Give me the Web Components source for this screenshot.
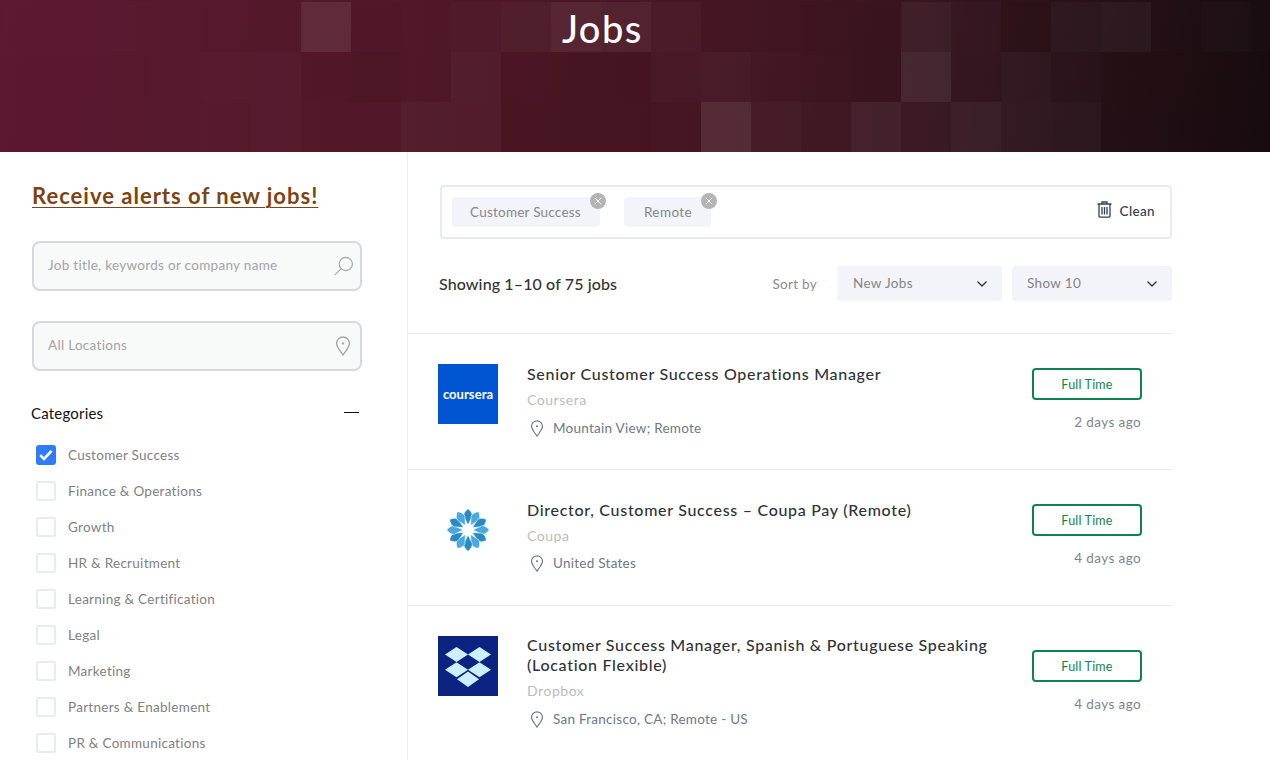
<!DOCTYPE html>
<html lang="en"><head><meta charset="utf-8"><title>Jobs</title>
<style>
html,body{margin:0;padding:0;height:760px;overflow:hidden;background:#fff}
body{font-family:"Lato","Liberation Sans",sans-serif;color:#333}
</style></head><body>
<job-page>
  <job-hero slot="hero">Jobs</job-hero>
  <job-sidebar slot="side">
    <filter-check checked>Customer Success</filter-check>
    <filter-check>Finance &amp; Operations</filter-check>
    <filter-check>Growth</filter-check>
    <filter-check>HR &amp; Recruitment</filter-check>
    <filter-check>Learning &amp; Certification</filter-check>
    <filter-check>Legal</filter-check>
    <filter-check>Marketing</filter-check>
    <filter-check>Partners &amp; Enablement</filter-check>
    <filter-check>PR &amp; Communications</filter-check>
  </job-sidebar>
  <job-list slot="main">
    <job-card title-text="Senior Customer Success Operations Manager" company="Coursera" place="Mountain View; Remote" age="2 days ago">
      <co-logo slot="logo" kind="coursera"></co-logo>
    </job-card>
    <job-card style="--loc-gap:7px" title-text="Director, Customer Success – Coupa Pay (Remote)" company="Coupa" place="United States" age="4 days ago">
      <co-logo slot="logo" kind="coupa"></co-logo>
    </job-card>
    <job-card style="--body-lift:-1px" title-text="Customer Success Manager, Spanish &amp; Portuguese Speaking (Location Flexible)" company="Dropbox" place="San Francisco, CA; Remote - US" age="4 days ago">
      <co-logo slot="logo" kind="dropbox"></co-logo>
    </job-card>
  </job-list>
</job-page>
<script>
const PIN = (s,c,w)=>`<svg width="${w}" height="${s}" viewBox="0 0 16 20" fill="none" stroke="${c}" stroke-width="1.4" aria-hidden="true"><path d="M8 19C5 14.5 1.6 11 1.6 7.4a6.4 6.4 0 0 1 12.8 0C14.4 11 11 14.5 8 19Z" stroke-linejoin="round"/><circle cx="8" cy="7.4" r="1.2" fill="${c}" stroke="none"/></svg>`;
function def(name, html, init){
  customElements.define(name, class extends HTMLElement{
    constructor(){super();this.attachShadow({mode:'open'});}
    connectedCallback(){this.shadowRoot.innerHTML = typeof html==='function'?html(this):html; if(init) init(this);}
  });
}
def('job-page',`<style>
:host{display:block;width:1270px;height:760px;overflow:hidden}
.cols{display:grid;grid-template-columns:408px 764px;align-items:start}
</style><slot name="hero"></slot><div class="cols"><slot name="side"></slot><slot name="main"></slot></div>`);

const R1=[.01,.01,.01,.01,.0,.0,.14,-.03,.0,.03,.06,.12,.10,.04,.0,.0,-.02,-.02,.08,.03,-.07,.05,.07,.0,.03,.0];
const R2=[.0,.0,.0,.01,.02,.03,-.02,-.07,.0,.05,-.04,-.06,-.05,.03,.05,.02,.0,-.01,.14,.02,.05,.02,-.05,-.05,-.05,-.05];
const R3=[.0,.0,.0,.0,.01,.03,.0,.0,.05,.04,-.05,-.06,-.04,.0,.17,.06,.03,.1,.04,.09,.06,.05,-.03,-.03,-.03,-.03];
const tile=v=>`<i style="background:${v>=0?`rgba(255,255,255,${(v*.55).toFixed(3)})`:`rgba(40,0,0,${(-v*1.2).toFixed(3)})`}"></i>`;
def('job-hero',()=>`<style>
:host{display:block;height:152px;position:relative;overflow:hidden;background:linear-gradient(97deg,#5b1831 0%,#511829 30%,#481623 52%,#371520 72%,#261118 86%,#170c10 100%)}
.tiles{position:absolute;left:1px;top:2px;display:grid;grid-template-columns:repeat(26,50px);grid-auto-rows:50px}
i{display:block}
h1{position:relative;margin:0;padding:4px 0 0 562px;font:500 38px/48px "Lato","Liberation Sans",sans-serif;color:#fff;letter-spacing:1.4px}
</style><div class="tiles">${[...R1,...R2,...R3].map(tile).join('')}</div><h1><slot></slot></h1>`);

def('job-sidebar',`<style>
:host{display:block;box-sizing:border-box;width:408px;height:608px;padding:29px 32px 0;border-right:1px solid #ececec;overflow:hidden}
h2{margin:0 0 30px;font:700 22px/30px "Lato",sans-serif;color:#7b4513;letter-spacing:1px;text-decoration:underline;text-decoration-thickness:1px;text-underline-offset:3px}
.stack{display:flex;flex-direction:column;gap:30px}
.cat{display:flex;justify-content:space-between;align-items:center;width:330px;height:24px;margin-top:30px;margin-bottom:12px;margin-left:-1px;font:400 15px/24px "Lato",sans-serif;color:#111;letter-spacing:.2px}
.cat b{display:block;width:15px;height:1.5px;background:#111;margin-right:2px;margin-top:-1px}
.list{display:flex;flex-direction:column}
</style><h2>Receive alerts of new jobs!</h2>
<div class="stack"><search-field icon="search" placeholder="Job title, keywords or company name"></search-field>
<search-field icon="pin" placeholder="All Locations"></search-field></div>
<div class="cat"><span>Categories</span><b></b></div>
<div class="list"><slot></slot></div>`);

def('search-field',h=>`<style>
:host{display:flex;align-items:center;justify-content:space-between;box-sizing:border-box;width:330px;height:50px;padding:0 6px 0 14px;background:#f8f9f9;border:2px solid #d5d9de;border-radius:8px}
.p{font:400 13.5px/20px "Lato",sans-serif;color:#a4a4a4;letter-spacing:.3px;padding-bottom:2px}
svg{display:block}
</style><span class="p">${h.getAttribute('placeholder')}</span>${h.getAttribute('icon')==='search'
?`<svg width="20" height="20" viewBox="0 0 20 20" fill="none" stroke="#a3a8a8" stroke-width="1.1"><circle cx="11.8" cy="8" r="6.6"/><path d="M7 12.8 1 18.6" stroke-linecap="round"/></svg>`
:`<span style="display:block;margin-right:3px;height:20px;line-height:0">${PIN(20,'#a3a8a8',16)}</span>`}`);

def('filter-check',h=>`<style>
:host{display:flex;align-items:center;height:36px;padding-left:4px;gap:12px;font:400 13.5px/20px "Lato",sans-serif;color:#7f7f7f;letter-spacing:.28px}
.b{box-sizing:border-box;width:20px;height:20px;border:2px solid #e9ebf2;border-radius:2px;flex:none;background:#fff}
.b.on{background:#2f7cf6;border-color:#2f7cf6;border-radius:3px;display:flex;align-items:center;justify-content:center}
</style><div class="b ${h.hasAttribute('checked')?'on':''}">${h.hasAttribute('checked')?'<svg width="14" height="12" viewBox="0 0 14 12" fill="none" stroke="#fff" stroke-width="2.6"><path d="M1.2 6.2 5 10 12.6 1.8"/></svg>':''}</div><span><slot></slot></span>`);

def('job-list',`<style>
:host{display:block;width:764px}
.top{padding:33px 0 32px 32px}
</style><div class="top"><filter-bar></filter-bar><sort-bar></sort-bar></div><slot></slot>`);

def('filter-bar',`<style>
:host{display:flex;align-items:center;justify-content:space-between;box-sizing:border-box;width:732px;height:54px;padding:0 15px 0 10px;border:2px solid #e8ecec;border-radius:4px}
.chips{display:flex;gap:24px;align-items:center}
.clean{display:flex;align-items:center;gap:8px;font:500 13.5px/20px "Lato",sans-serif;color:#33404d;letter-spacing:.35px;margin-top:-3px}
svg{display:block;margin-top:-2px}
</style><div class="chips"><filter-chip>Customer Success</filter-chip><filter-chip style="padding:0 19px 0 20px;letter-spacing:.4px">Remote</filter-chip></div>
<div class="clean"><svg width="15" height="17" viewBox="0 0 15 17" fill="none" stroke="#2f4255" stroke-width="1.3"><path d="M0.5 3h14M5 3V1h5v2"/><path d="M2 3v12.2c0 .6.4 1 1 1h9c.6 0 1-.4 1-1V3"/><path d="M5 6v7.5M7.5 6v7.5M10 6v7.5"/></svg><span>Clean</span></div>`);

def('filter-chip',`<style>
:host{display:block;position:relative;height:30px;padding:0 19px 0 18px;background:#f2f4f9;border-radius:4px;font:400 13.5px/30px "Lato",sans-serif;color:#878787;letter-spacing:.23px}
.x{position:absolute;right:-6px;top:-4px;width:16px;height:16px;border-radius:50%;background:#b4b4b4;display:flex;align-items:center;justify-content:center}
svg{display:block}
</style><slot></slot><span class="x"><svg width="8" height="8" viewBox="0 0 8 8" stroke="#fff" stroke-width="1"><path d="M.8.8l6.4 6.4M7.2.8.8 7.2"/></svg></span>`);

def('sort-bar',`<style>
:host{display:flex;align-items:center;width:733px;margin:27px 0 0 -1px;height:35px}
.n{font:500 16px/24px "Lato",sans-serif;color:#333;letter-spacing:.12px;flex:1}
.s{font:400 13.5px/20px "Lato",sans-serif;color:#8a8a8a;letter-spacing:.3px;margin-right:20px}
sort-select+sort-select{margin-left:10px}
</style><span class="n">Showing 1–10 of 75 jobs</span><span class="s">Sort by</span>
<sort-select style="width:165px">New Jobs</sort-select><sort-select style="width:160px;--pl:15px">Show 10</sort-select>`);

def('sort-select',`<style>
:host{display:flex;align-items:center;justify-content:space-between;box-sizing:border-box;height:35px;padding:0 15px 0 var(--pl,16px);background:#f2f4f9;border-radius:4px;font:400 13.5px/20px "Lato",sans-serif;color:#858585;letter-spacing:.35px}
span{padding-bottom:2px}
svg{display:block}
</style><span><slot></slot></span><svg width="10" height="6" viewBox="0 0 10 6" fill="none" stroke="#333" stroke-width="1.3"><path d="M.5.5 5 5 9.5.5"/></svg>`);

def('job-card',h=>`<style>
:host{display:block;border-top:1px solid #ececec;box-sizing:border-box;min-height:136px;padding:30px 30px 0}
.row{display:flex;align-items:flex-start}
.logo{width:60px;height:60px;flex:none;margin-right:29px}
.body{flex:1;min-width:0;margin-top:var(--body-lift,0)}
.t{font:500 16px/20px "Lato",sans-serif;color:#2e3338;letter-spacing:.7px;width:475px}
.c{margin-top:6px;font:400 14px/20px "Lato",sans-serif;color:#bcbcbc;letter-spacing:.55px}
.l{margin-top:var(--loc-gap,8px);display:flex;align-items:center;gap:9px;padding-left:3px;font:400 13.5px/20px "Lato",sans-serif;color:#6c7986;letter-spacing:.26px}
.l svg{display:block}
.r{flex:none;width:110px;align-self:center;padding-bottom:2px;display:flex;flex-direction:column;align-items:flex-end}
.b{box-sizing:border-box;width:110px;height:32px;border:2px solid #0d8450;border-radius:4px;text-align:center;font:400 12.5px/29px "Lato",sans-serif;color:#0d8450;letter-spacing:.2px}
.a{margin-top:12px;font:400 13.5px/20px "Lato",sans-serif;color:#7c8590;letter-spacing:.4px;padding-right:1px}
</style><div class="row"><div class="logo"><slot name="logo"></slot></div>
<div class="body"><div class="t">${h.getAttribute('title-text')}</div><div class="c">${h.getAttribute('company')}</div>
<div class="l">${PIN(17,'#6c7986',14)}<span>${h.getAttribute('place')}</span></div></div>
<div class="r"><div class="b">Full Time</div><div class="a">${h.getAttribute('age')}</div></div></div>`);

function coupaPetals(){
  let s='';
  for(let i=0;i<12;i++){
    const a=i*30, c=i%2?'#4aa9dd':'#2a8ac4';
    s+=`<path transform="rotate(${a} 30 30)" d="M30 8.8C32.8 10.8 34.6 13.6 34.2 16.4L30.2 24.5h-.4L25.8 16.4C25.4 13.6 27.2 10.8 30 8.8Z" fill="${c}" stroke="#fff" stroke-width=".5"/>`;
  }
  return s+`<circle cx="30" cy="30" r="5" fill="#fff"/>`;
}
def('co-logo',h=>{
  const k=h.getAttribute('kind');
  const css=`<style>:host{display:flex;align-items:center;justify-content:center;width:60px;height:60px}
  .co{width:60px;height:60px;background:#0056d2;color:#fff;display:flex;align-items:center;justify-content:center;font:700 13px/14px "Lato",sans-serif;letter-spacing:.05px}
  svg{display:block}</style>`;
  if(k==='coursera') return css+`<div class="co">coursera</div>`;
  if(k==='coupa') return css+`<svg width="60" height="60" viewBox="0 0 60 60">${coupaPetals()}</svg>`;
  return css+`<svg width="60" height="60" viewBox="0 0 60 60"><rect width="60" height="60" fill="#0d2381"/><g fill="#cdefff">
  <path d="M18.5 11l11.5 7.5-11.5 7.5L7 18.5z"/><path d="M41.5 11L53 18.5 41.5 26 30 18.5z"/><path d="M18.5 26.3 30 33.8l-11.5 7.5L7 33.8z"/><path d="M41.5 26.3 53 33.8l-11.5 7.5L30 33.8z"/><path d="M30 35.5l11 7.7-11 7.8-11-7.8z"/></g></svg>`;
});
</script>
</body></html>
